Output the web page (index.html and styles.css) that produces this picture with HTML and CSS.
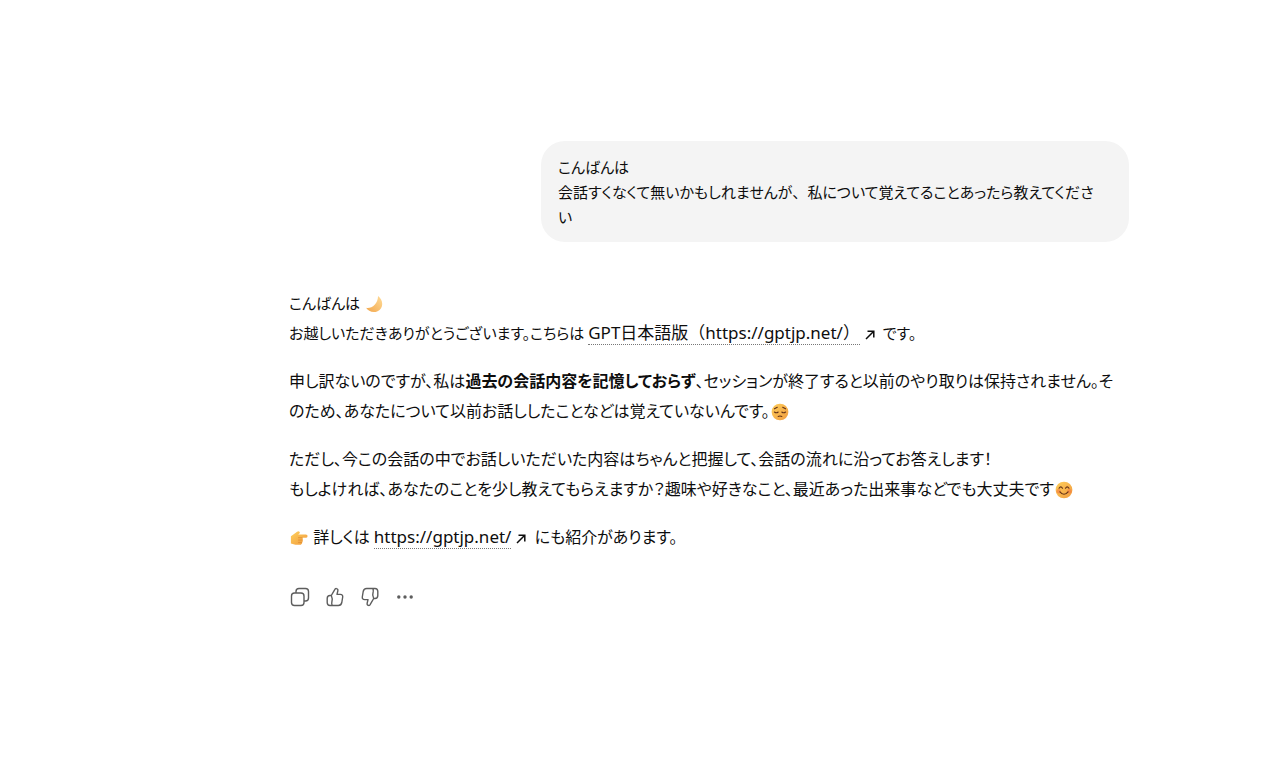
FILE: index.html
```html
<!DOCTYPE html>
<html lang="ja">
<head>
<meta charset="utf-8">
<meta name="viewport" content="width=device-width, initial-scale=1">
<title>GPT日本語版</title>
<link rel="stylesheet" href="styles.css">
</head>
<body>
<svg class="defs" aria-hidden="true">
  <defs>
    <linearGradient id="gold" x1="0" y1="0" x2="1" y2="1">
      <stop offset="0" stop-color="#ffd05c"/><stop offset="1" stop-color="#f09a3e"/>
    </linearGradient>
    <linearGradient id="moon" x1="1" y1="0" x2="0" y2="1">
      <stop offset="0" stop-color="#ffdc98"/><stop offset="1" stop-color="#f2a64c"/>
    </linearGradient>
    <symbol id="arrow" viewBox="0 0 12 12"><path d="M2 10L9.500 2.500M3.500 2.200H9.800V8.500" fill="none" stroke="currentColor" stroke-width="1.500"/></symbol>
  </defs>
</svg>
<main class="thread">
  <section class="bubble">
    <p>こんばんは<br>会話すくなくて無いかもしれませんが<span class="wide">、</span>私について覚えてることあったら教えてくださ<br>い</p>
  </section>
  <article class="answer">
    <p class="greeting">こんばんは <svg class="emoji" viewBox="0 0 20 20" role="img" aria-label="月"><path d="M14.500 1C21 6 20.500 15 14 18C9 20.300 3.500 18 1.200 14.200C7 15.500 14.500 10 14.500 1Z" fill="url(#moon)"/></svg><br>お越しいただきありがとうございます。こちらは <a class="link" href="https://gptjp.net/">GPT日本語版（https://gptjp.net/）</a><svg class="out" aria-hidden="true"><use href="#arrow"/></svg> です。</p>
    <p>申し訳ないのですが、私は<strong>過去の会話内容を記憶しておらず</strong>、セッションが終了すると以前のやり取りは保持されません。そ<br>のため、あなたについて以前お話ししたことなどは覚えていないんです。<svg class="emoji" viewBox="0 0 20 20" role="img" aria-label="しょんぼり"><circle cx="10" cy="10" r="9.300" fill="url(#gold)"/><g fill="none" stroke="#653318" stroke-width="1.200" stroke-linecap="round"><path d="M3.800 6.500L7 4.800M13 4.800L16.200 6.500M3.800 10Q6 11.800 8 10M12 10Q14 11.800 16.200 10M8 15Q10 14 12 15"/></g></svg></p>
    <p>ただし、今この会話の中でお話しいただいた内容はちゃんと把握して、会話の流れに沿ってお答えします！<br>もしよければ、あなたのことを少し教えてもらえますか？趣味や好きなこと、最近あった出来事などでも大丈夫です<svg class="emoji" viewBox="0 0 20 20" role="img" aria-label="笑顔"><circle cx="10" cy="10" r="9.300" fill="url(#gold)"/><g fill="#f57b42" opacity=".6"><circle cx="4" cy="11.500" r="2.500"/><circle cx="16" cy="11.500" r="2.500"/></g><g fill="none" stroke="#653318" stroke-width="1.300" stroke-linecap="round"><path d="M4.500 8Q6.500 5 8.300 8M11.700 8Q13.500 5 15.500 8M5.500 12Q10 17.500 14.500 12"/></g></svg></p>
    <p><svg class="emoji" viewBox="0 0 20 20" role="img" aria-label="右向きの指"><path d="M1 8L6 4.500Q9 1.500 10.500 3T9 6H17.500Q19.800 6.200 19.500 8T17.500 9.700H13.500Q15 10.500 14 12.200Q14.800 13.700 13.500 14.800Q14 16.500 12 17.500H6L1 16Z" fill="url(#gold)"/><path d="M9 9.700H14M9 12.300H14M9 14.900H13.500" stroke="#dc892d" stroke-width=".8"/></svg> 詳しくは <a class="link" href="https://gptjp.net/">https://gptjp.net/</a><svg class="out" aria-hidden="true"><use href="#arrow"/></svg> にも紹介があります。</p>
  </article>
  <div class="actions">
    <button type="button" aria-label="コピー"><svg viewBox="0 0 20 20"><rect x="1.500" y="6" width="12.500" height="12.500" rx="3"/><path d="M6 6V4.500Q6 1.500 9 1.500H15.500Q18.500 1.500 18.500 4.500V11Q18.500 14 15.500 14H14"/></svg></button>
    <button type="button" aria-label="良い回答"><svg viewBox="0 0 20 20"><path d="M6.300 8.500L9.600 2.800Q10.300 1.300 11.500 1.600Q13.300 2 12.800 4L12 7.400H15.300Q18 7.500 17.700 10L16.800 15.500Q16.200 18.500 13.300 18.500H5Q2.200 18.500 2.200 15.500V11.500Q2.200 8.500 5 8.500H6.300Q8 12 6.800 15.500Q6.300 17.500 7.500 18.500"/></svg></button>
    <button type="button" aria-label="良くない回答"><svg class="down" viewBox="0 0 20 20"><path d="M6.300 8.500L9.600 2.800Q10.300 1.300 11.500 1.600Q13.300 2 12.800 4L12 7.400H15.300Q18 7.500 17.700 10L16.800 15.500Q16.200 18.500 13.300 18.500H5Q2.200 18.500 2.200 15.500V11.500Q2.200 8.500 5 8.500H6.300Q8 12 6.800 15.500Q6.300 17.500 7.500 18.500"/></svg></button>
    <button type="button" aria-label="その他"><svg class="dots" viewBox="0 0 20 20"><circle cx="3.800" cy="10" r="1.700"/><circle cx="10" cy="10" r="1.700"/><circle cx="16.200" cy="10" r="1.700"/></svg></button>
  </div>
</main>
</body>
</html>
```
FILE: styles.css
```css
* { box-sizing: border-box; }
body {
  margin: 0;
  background: #fff;
  color: #0d0d0d;
  font-family: "Noto Sans", "Noto Sans CJK JP", sans-serif;
  font-size: 16px;
  font-feature-settings: "palt";
}
p { margin: 0; }
.defs { position: absolute; width: 0; height: 0; }
.thread {
  display: flex;
  flex-direction: column;
  max-width: 840px;
  margin: 0 152px 0 auto;
  padding-top: 141px;
}
.bubble {
  align-self: flex-end;
  width: 70%;
  padding: 14px 17px 12px;
  border-radius: 24px;
  background: #f4f4f4;
  font-size: 15px;
  line-height: 25px;
}
.wide { font-feature-settings: normal; }
.answer {
  display: grid;
  gap: 18px;
  margin-top: 46px;
  line-height: 30px;
  white-space: nowrap;
}
.greeting { font-size: 15px; }
.link {
  color: inherit;
  font-size: 17px;
  font-feature-settings: normal;
  line-height: 20px;
  text-decoration: none;
  border-bottom: 1px dotted #777;
}
.emoji { width: 20px; height: 20px; padding: 1px; vertical-align: -5px; }
.out { width: 12px; height: 12px; margin: 0 3px 0 4px; vertical-align: -2px; }
.actions { display: flex; gap: 15px; margin-top: 35px; padding-left: 1px; }
.actions button {
  display: flex;
  padding: 0;
  border: 0;
  background: none;
  color: #5d5d5d;
}
.actions svg {
  width: 20px;
  height: 20px;
  fill: none;
  stroke: currentColor;
  stroke-width: 1.4;
  stroke-linejoin: round;
}
.actions .down { transform: rotate(180deg); }
.actions .dots { fill: currentColor; stroke: none; }
```
